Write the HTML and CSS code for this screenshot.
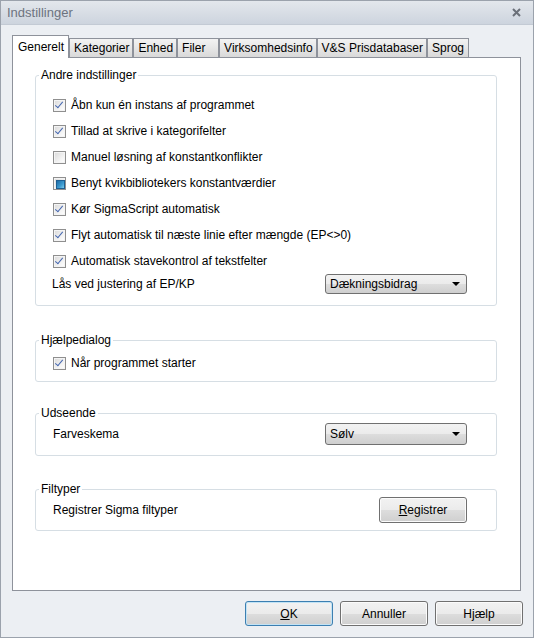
FILE: index.html
```html
<!DOCTYPE html>
<html lang="da">
<head>
    <meta charset="UTF-8">
    <meta name="viewport" content="width=device-width, initial-scale=1.0">
    <title>Indstillinger</title>
    <link rel="stylesheet" href="styles.css">
</head>
<body>
<div class="window">
    <div class="titlebar">
        <span class="title">Indstillinger</span>
        <svg class="close" width="9" height="9" viewBox="0 0 9 9">
            <path d="M1 1 L8 8 M8 1 L1 8" stroke="#6b7079" stroke-width="2"/>
        </svg>
    </div>
    <div class="content">
        <div class="tabs">
            <div class="tab active">Generelt</div>
            <div class="tab">Kategorier</div>
            <div class="tab">Enhed</div>
            <div class="tab">Filer</div>
            <div class="tab">Virksomhedsinfo</div>
            <div class="tab">V&amp;S Prisdatabaser</div>
            <div class="tab">Sprog</div>
        </div>
        <div class="panel">
            <fieldset class="group group-general">
                <legend>Andre indstillinger</legend>
                <div class="group-body">
                    <div class="check-row"><span class="box checked"></span>Åbn kun én instans af programmet</div>
                    <div class="check-row"><span class="box checked"></span>Tillad at skrive i kategorifelter</div>
                    <div class="check-row"><span class="box"></span>Manuel løsning af konstantkonflikter</div>
                    <div class="check-row"><span class="box mixed"></span>Benyt kvikbibliotekers konstantværdier</div>
                    <div class="check-row"><span class="box checked"></span>Kør SigmaScript automatisk</div>
                    <div class="check-row"><span class="box checked"></span>Flyt automatisk til næste linie efter mængde (EP&lt;&gt;0)</div>
                    <div class="check-row"><span class="box checked"></span>Automatisk stavekontrol af tekstfelter</div>
                    <div class="field-row">
                        <span>Lås ved justering af EP/KP</span>
                        <div class="combo">Dækningsbidrag<span class="arrow"></span></div>
                    </div>
                </div>
            </fieldset>

            <fieldset class="group group-help">
                <legend>Hjælpedialog</legend>
                <div class="group-body">
                    <div class="check-row"><span class="box checked"></span>Når programmet starter</div>
                </div>
            </fieldset>

            <fieldset class="group group-look">
                <legend>Udseende</legend>
                <div class="group-body">
                    <div class="field-row">
                        <span>Farveskema</span>
                        <div class="combo">Sølv<span class="arrow"></span></div>
                    </div>
                </div>
            </fieldset>

            <fieldset class="group group-files">
                <legend>Filtyper</legend>
                <div class="group-body">
                    <div class="field-row">
                        <span>Registrer Sigma filtyper</span>
                        <button class="btn btn-register"><u>R</u>egistrer</button>
                    </div>
                </div>
            </fieldset>
        </div>
    </div>
    <div class="footer">
        <button class="btn default"><u>O</u>K</button>
        <button class="btn">Annuller</button>
        <button class="btn">Hjælp</button>
    </div>
</div>
</body>
</html>
```

FILE: styles.css
```css
body {
    margin: 0;
    padding: 0;
    background-color: #eceff3;
    font-family: "Liberation Sans", Arial, sans-serif;
    font-size: 12px;
    color: #000;
}
.window {
    width: 534px;
    height: 638px;
    box-sizing: border-box;
    border: 1px solid #9ba2ac;
    background-color: #eceff3;
    display: flex;
    flex-direction: column;
}
.titlebar {
    height: 24px;
    flex: none;
    display: flex;
    align-items: center;
    justify-content: space-between;
    padding: 0 12px 0 6px;
    background: linear-gradient(#e3e7ec, #cdd4de);
    border-bottom: 1px solid #c3cad4;
    box-sizing: border-box;
}
.title {
    font-size: 13px;
    color: #6d7380;
}
.close {
    display: block;
}
.content {
    flex: 1;
    display: flex;
    flex-direction: column;
    padding: 10px 12px 0 11px;
}
.tabs {
    display: flex;
    align-items: flex-end;
    height: 23px;
    margin-bottom: -1px;
    position: relative;
    z-index: 1;
}
.tab {
    height: 19px;
    box-sizing: border-box;
    min-width: 42px;
    padding: 2px 3px 0 4px;
    margin-bottom: 1px;
    border: 1px solid #8e929b;
    border-bottom: none;
    background: linear-gradient(#f3f3f3, #e6e6e6 50%, #d9d9d9);
    white-space: nowrap;
}
.tab.active {
    height: 23px;
    margin-bottom: 0;
    padding: 4px 4px 0 5px;
    background: #fff;
}
.panel {
    flex: 1;
    background-color: #fff;
    border: 1px solid #8e929b;
    padding: 10px 23px 0 22px;
}
.group {
    margin: 0;
    padding: 0;
    border: 1px solid #d6dee4;
    border-radius: 3px;
}
.group legend {
    margin-left: 3px;
    padding: 0 2px;
    line-height: 14px;
}
.group-body {
    padding: 0 29px 0 17px;
}
.group-general .group-body {
    padding-top: 10px;
    padding-bottom: 11px;
}
.group-help {
    margin-top: 27px;
}
.group-help .group-body {
    padding-top: 3px;
    padding-bottom: 5px;
}
.group-look {
    margin-top: 24px;
}
.group-look .group-body {
    padding-top: 3px;
    padding-bottom: 10px;
}
.group-files {
    margin-top: 26px;
}
.group-files .group-body {
    padding-top: 1px;
    padding-bottom: 7px;
}
.check-row {
    height: 26px;
    display: flex;
    align-items: center;
}
.box {
    width: 13px;
    height: 13px;
    box-sizing: border-box;
    margin-right: 5px;
    border: 1px solid #8f8f8f;
    background: linear-gradient(135deg, #d9d9d9, #f6f6f6 70%, #fff);
    box-shadow: inset 0 0 0 1px #f4f4f4;
    position: relative;
}
.box.checked::after {
    content: "";
    position: absolute;
    left: 3px;
    top: 0px;
    width: 3px;
    height: 7px;
    border: solid #4466b0;
    border-width: 0 1.5px 1.5px 0;
    transform: rotate(40deg);
}
.box.mixed::after {
    content: "";
    position: absolute;
    left: 2px;
    top: 2px;
    width: 7px;
    height: 7px;
    border: 1px solid #1d5f92;
    background: linear-gradient(135deg, #1c6ba6, #3d9bd0 60%, #7ccbeb);
}
.field-row {
    display: flex;
    align-items: center;
    justify-content: space-between;
}
.group-general .field-row {
    height: 20px;
    margin-left: -1px;
}
.group-look .field-row {
    height: 22px;
}
.group-files .field-row {
    height: 26px;
}
.combo {
    width: 142px;
    height: 100%;
    box-sizing: border-box;
    display: flex;
    align-items: center;
    justify-content: space-between;
    padding: 0 6px 0 4px;
    border: 1px solid #707070;
    border-radius: 3px;
    background: linear-gradient(#f2f2f2, #ebebeb 50%, #dddddd 51%, #cfcfcf);
}
.arrow {
    width: 0;
    height: 0;
    border-left: 4px solid transparent;
    border-right: 4px solid transparent;
    border-top: 4px solid #000;
}
.btn {
    width: 88px;
    height: 25px;
    padding: 0;
    font-family: inherit;
    font-size: 12px;
    color: #000;
    border: 1px solid #707070;
    border-radius: 3px;
    background: linear-gradient(#f2f2f2, #ebebeb 50%, #dddddd 51%, #cfcfcf);
    box-shadow: inset 0 0 0 1px #fbfbfb;
}
.btn-register {
    height: 26px;
}
.btn.default {
    border-color: #3c7fb1;
    box-shadow: inset 0 0 0 1px #c2e3f5;
}
.footer {
    flex: none;
    display: flex;
    justify-content: flex-end;
    gap: 7px;
    padding: 10px 10px 11px 0;
}
```
